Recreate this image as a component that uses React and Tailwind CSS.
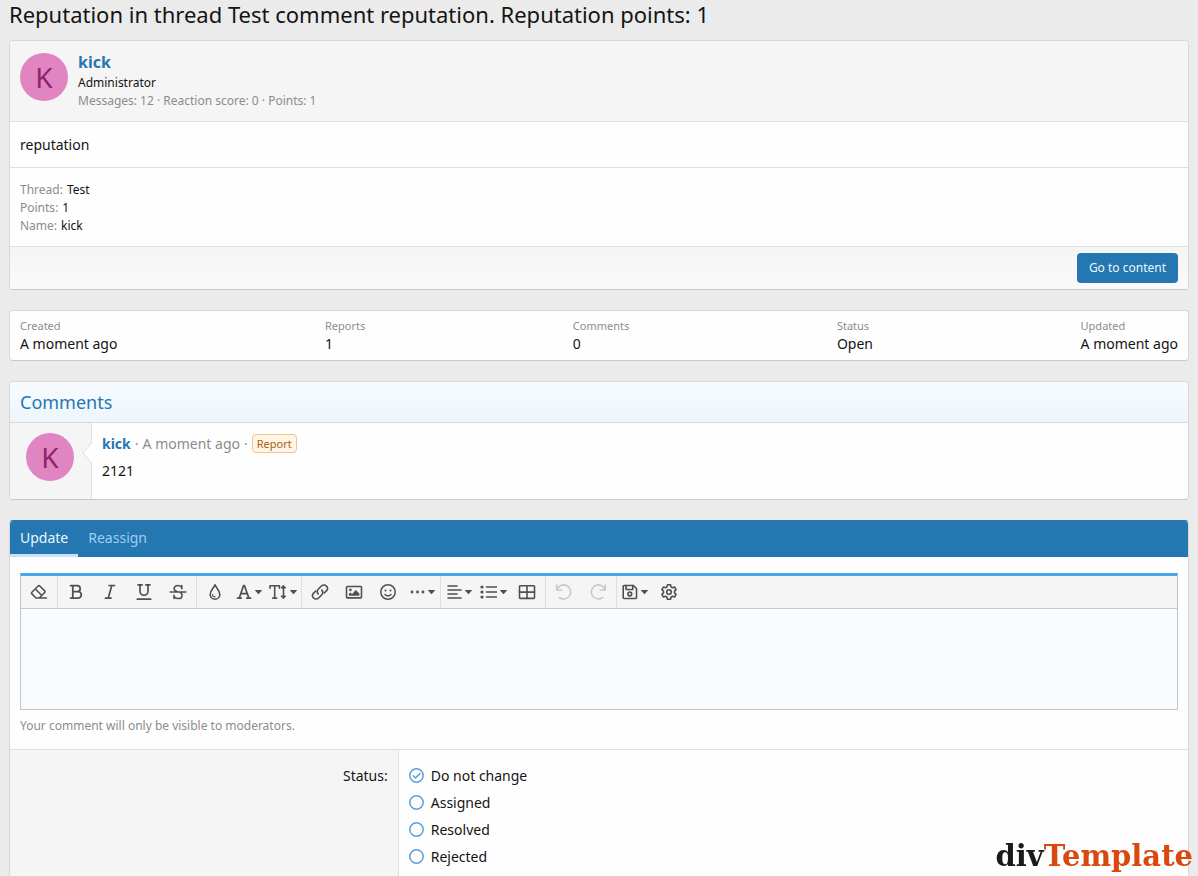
import { useState } from "react"
import { FaRegFaceSmile } from "react-icons/fa6"

const card =
  "rounded-[4px] border border-[#d8d8d8] border-b-[#c8c8c8] bg-[#fefefe] overflow-hidden"

const stats = [
  { label: "Created", value: "A moment ago" },
  { label: "Reports", value: "1" },
  { label: "Comments", value: "0" },
  { label: "Status", value: "Open" },
  { label: "Updated", value: "A moment ago" },
]

const details = [
  { label: "Thread", value: "Test" },
  { label: "Points", value: "1" },
  { label: "Name", value: "kick" },
]

const statuses = ["Do not change", "Assigned", "Resolved", "Rejected"]

function Icon({ children, width = 18 }) {
  return (
    <svg
      width={width}
      height="18"
      viewBox={`0 0 ${width} 18`}
      fill="none"
      stroke="currentColor"
      strokeWidth="1.6"
      strokeLinecap="round"
      strokeLinejoin="round"
      aria-hidden="true"
    >
      {children}
    </svg>
  )
}

function Caret() {
  return (
    <svg width="7" height="4" viewBox="0 0 7 4" fill="currentColor" aria-hidden="true">
      <path d="M.3 0h6.400c.3 0 .4.400.2.600L4 3.700a.7.7 0 0 1-1 0L.1.600C-.1.400 0 0 .3 0z" />
    </svg>
  )
}

const toolbar = [
  [
    {
      name: "Remove formatting",
      icon: (
        <Icon>
          <path d="M16.500 15H6L1.900 10.900a1.100 1.100 0 0 1 0-1.600l6.300-6.300a1.100 1.100 0 0 1 1.600 0l4.900 4.900a1.100 1.100 0 0 1 0 1.600L9.200 15M5.400 6l6.200 6.300" />
        </Icon>
      ),
    },
  ],
  [
    {
      name: "Bold",
      icon: (
        <Icon>
          <path
            d="M3.600 2.700h6.600a2.900 2.900 0 0 1 0 5.900H6M5.800 2.700v12.400M3.600 15.100h7.500a3.200 3.200 0 0 0 0-6.500H9"
            strokeWidth="1.800"
          />
        </Icon>
      ),
    },
    {
      name: "Italic",
      icon: (
        <Icon>
          <path d="M8 2.500h5.500M4.500 15.200H10M10.800 2.500L7.200 15.200" strokeWidth="1.700" />
        </Icon>
      ),
    },
    {
      name: "Underline",
      icon: (
        <Icon>
          <path
            d="M3 1.800h4.200M10.800 1.800H15M5 1.800v6.400a4 4 0 0 0 8 0V1.800M2.300 16.200h13.400"
            strokeWidth="1.700"
          />
        </Icon>
      ),
    },
    {
      name: "Strike through",
      icon: (
        <Icon>
          <path d="M1.200 9h15.600M12.800 5.800V2.600M12.800 4.600C12.200 3.300 10.800 2.500 9 2.500c-2.200 0-3.900 1.200-3.900 3 0 1.700 1.400 2.600 3.300 3.200M5 15.400v-3.200M5 13.300c.7 1.400 2.200 2.200 4 2.200 2.300 0 4.100-1.200 4.100-3.100 0-1.500-.8-2.500-2-3.100" />
        </Icon>
      ),
    },
  ],
  [
    {
      name: "Text color",
      icon: (
        <Icon>
          <path d="M9 1.800c.9 3 4.800 5.600 4.800 9.600a4.800 4.800 0 0 1-9.600 0C4.200 7.400 8.100 4.800 9 1.800z" />
          <path d="M6.500 11.500A2.500 2.500 0 0 0 9 13.900" strokeWidth="1.100" />
        </Icon>
      ),
    },
    {
      name: "Font family",
      caret: true,
      icon: (
        <Icon width={16}>
          <path
            d="M1.500 15.100h3.800M10.700 15.100h3.800M3.300 15.100L7.500 2.700h1l4.400 12.400M5 10.700h6"
            strokeWidth="1.700"
          />
        </Icon>
      ),
    },
    {
      name: "Font size",
      caret: true,
      icon: (
        <Icon width={18}>
          <path d="M1 5.300V2.700h9.400v2.600M5.700 2.700v12.400M3.700 15.100h4" />
          <path d="M14.500 4v10" />
          <path
            d="M14.500 2.500l2.200 2.500h-4.400zM14.500 15.500l2.200-2.500h-4.400z"
            fill="currentColor"
            strokeWidth="1"
          />
        </Icon>
      ),
    },
  ],
  [
    {
      name: "Insert link",
      icon: (
        <Icon>
          <path d="M7.200 10.900a3.500 3.500 0 0 1 .2-4.900l3-3a3.500 3.500 0 0 1 5 0 3.500 3.500 0 0 1 0 4.900l-1.900 1.900" />
          <path d="M10.800 7.100a3.500 3.500 0 0 1-.2 4.900l-3 3a3.500 3.500 0 0 1-5 0 3.500 3.500 0 0 1 0-4.900l1.900-1.900" />
        </Icon>
      ),
    },
    {
      name: "Insert image",
      icon: (
        <Icon>
          <rect x="1.500" y="3.500" width="15" height="11.400" rx=".8" />
          <circle cx="5.400" cy="6.900" r="1.300" fill="currentColor" stroke="none" />
          <path
            d="M3.800 12.800v-1.900l1.500-1.500 1.800 1.500 3.700-4 3.500 3.500v2.400z"
            fill="currentColor"
            stroke="none"
          />
        </Icon>
      ),
    },
    { name: "Smilies", icon: <FaRegFaceSmile size={16} aria-hidden="true" /> },
    {
      name: "Insert",
      caret: true,
      icon: (
        <Icon width={15}>
          <g fill="currentColor" stroke="none">
            <circle cx="2" cy="9" r="1.400" />
            <circle cx="7.500" cy="9" r="1.400" />
            <circle cx="13" cy="9" r="1.400" />
          </g>
        </Icon>
      ),
    },
  ],
  [
    {
      name: "Alignment",
      caret: true,
      icon: (
        <Icon width={15}>
          <path d="M1 3h9M1 7h13M1 11h9M1 15h13" />
        </Icon>
      ),
    },
    {
      name: "List",
      caret: true,
      icon: (
        <Icon width={17}>
          <path d="M6.500 4h10M6.500 9h10M6.500 14h10" />
          <g fill="currentColor" stroke="none">
            <circle cx="2" cy="4" r="1.600" />
            <circle cx="2" cy="9" r="1.600" />
            <circle cx="2" cy="14" r="1.600" />
          </g>
        </Icon>
      ),
    },
    {
      name: "Insert table",
      icon: (
        <Icon>
          <rect x="1.500" y="2.800" width="15" height="12.600" rx=".8" />
          <path d="M1.500 9.100h15M9 2.800v12.600" />
        </Icon>
      ),
    },
  ],
  [
    {
      name: "Undo",
      disabled: true,
      icon: (
        <Icon>
          <path d="M1.700 2v5h5M2 6.800a7 7 0 1 1 2.400 7.700" />
        </Icon>
      ),
    },
    {
      name: "Redo",
      disabled: true,
      icon: (
        <Icon>
          <path d="M16.300 2v5h-5M16 6.800a7 7 0 1 0-2.400 7.700" />
        </Icon>
      ),
    },
  ],
  [
    {
      name: "Drafts",
      caret: true,
      icon: (
        <Icon width={16}>
          <path d="M2.200 2.500h9.300l3 3v9a1 1 0 0 1-1 1H2.200a1 1 0 0 1-1-1v-11a1 1 0 0 1 1-1z" />
          <path d="M4 2.500v4h6.800v-4" />
          <circle cx="7.800" cy="11" r="1.900" />
        </Icon>
      ),
    },
    {
      name: "Toggle BB code",
      icon: (
        <Icon>
          <path d="M7.500 1.800h3l.5 2.100 1.500.9 2.100-.7 1.500 2.600-1.600 1.500v1.700l1.600 1.500-1.500 2.600-2.100-.7-1.500.9-.5 2.100h-3L7 14.200l-1.500-.9-2.100.7-1.500-2.600 1.600-1.500V8.200L1.900 6.700l1.500-2.600 2.100.7L7 3.900z" />
          <circle cx="9" cy="9" r="2.300" />
        </Icon>
      ),
    },
  ],
]

function Avatar() {
  return (
    <a
      href="#kick"
      className="flex h-12 w-12 shrink-0 items-center justify-center rounded-full bg-[#e085c2] text-[28px] leading-none text-[#8f246b]"
    >
      K
    </a>
  )
}

export default function App() {
  const [status, setStatus] = useState(statuses[0])
  const [tab, setTab] = useState("Update")

  return (
    <div className="flex min-h-screen flex-col bg-[#ebebeb] px-[9px] font-['Noto_Sans','Open_Sans',sans-serif] text-[14px] leading-[21px] text-[#141414]">
      <h1 className="pb-3 text-[22px] leading-7">
        Reputation in thread Test comment reputation. Reputation points: 1
      </h1>

      {/* Reported content */}
      <section className={card}>
        <div className="flex gap-[10px] border-b border-[#dfdfdf] bg-[#f5f5f5] px-[10px] pt-3 pb-[11px]">
          <Avatar />
          <div className="text-[12px] leading-[18px]">
            <a
              href="#kick"
              className="mb-[3px] block text-[16px] leading-[18px] font-bold text-[#2577b1]"
            >
              kick
            </a>
            <p>Administrator</p>
            <p className="text-[#8c8c8c]">Messages: 12 · Reaction score: 0 · Points: 1</p>
          </div>
        </div>
        <p className="border-b border-[#dfdfdf] px-[10px] py-3">reputation</p>
        <dl className="border-b border-[#dfdfdf] px-[10px] pt-[13px] pb-[11px] text-[12px] leading-[18px]">
          {details.map((d) => (
            <div key={d.label} className="flex gap-1">
              <dt className="text-[#8c8c8c]">{d.label}:</dt>
              <dd>{d.value}</dd>
            </div>
          ))}
        </dl>
        <div className="flex justify-end bg-linear-to-b from-[#f5f5f5] to-[#fafafa] px-[10px] py-[6px]">
          <a
            href="#content"
            className="rounded-[4px] bg-[#2577b1] px-3 py-[6px] text-[12px] leading-[18px] text-[#edf6fd]"
          >
            Go to content
          </a>
        </div>
      </section>

      {/* Summary */}
      <dl className={`${card} mt-5 flex justify-between px-[10px] py-[6px]`}>
        {stats.map((s) => (
          <div key={s.label}>
            <dt className="text-[11px] leading-[17px] text-[#8c8c8c]">{s.label}</dt>
            <dd className="leading-5">{s.value}</dd>
          </div>
        ))}
      </dl>

      {/* Comments */}
      <section className={`${card} mt-5`}>
        <h2 className="border-b border-[#d2dbe3] bg-linear-to-b from-[#f7fbff] to-[#edf6fd] px-[10px] py-[6px] text-[18px] leading-7 text-[#2577b1]">
          Comments
        </h2>
        <article className="flex">
          <div className="relative w-[82px] shrink-0 border-r border-[#dfdfdf] bg-[#f5f5f5] px-4 pt-[10px] pb-[18px]">
            <Avatar />
            <svg
              className="absolute top-5 -right-px"
              width="10"
              height="20"
              viewBox="0 0 10 20"
              aria-hidden="true"
            >
              <path d="M10 0v20L1 10z" fill="#fefefe" />
              <path d="M9.500 0L1 10l8.500 10" fill="none" stroke="#dfdfdf" />
            </svg>
          </div>
          <div className="px-[10px] pt-[10px]">
            <p className="flex items-center gap-1 text-[#8c8c8c]">
              <a href="#kick" className="font-bold text-[#2577b1]">
                kick
              </a>
              <span>·</span>
              <time>A moment ago</time>
              <span>·</span>
              <span className="rounded-[4px] border border-[#f1c38b] bg-[#fff4e5] px-1 text-[11px] leading-[17px] text-[#a66212]">
                Report
              </span>
            </p>
            <p className="pt-[6px]">2121</p>
          </div>
        </article>
      </section>

      {/* Update form */}
      <form className="mt-5 flex flex-1 flex-col overflow-hidden rounded-t-[4px] border border-b-0 border-[#d8d8d8] border-t-[#2577b1] bg-[#fefefe]">
        <div className="flex bg-[#2577b1]">
          {["Update", "Reassign"].map((t) => (
            <button
              key={t}
              type="button"
              onClick={() => setTab(t)}
              className={`border-b-3 px-[10px] py-[6px] leading-[21px] ${
                tab === t
                  ? "border-[#c7e2f6] text-[#edf6fd]"
                  : "border-transparent text-[#9ecfee]"
              }`}
            >
              {t}
            </button>
          ))}
        </div>

        <div className="border-b border-[#dfdfdf] px-[10px] pt-4 pb-[13px]">
          <div className="border border-t-3 border-[#c0c6ca] border-t-[#47a7eb]">
            <div className="flex border-b border-[#c8c8c8] bg-[#f5f5f5] text-[#505050]">
              {toolbar.map((group, i) => (
                <div
                  key={i}
                  className="flex border-r border-[#dfdfdf] px-px last:border-r-0"
                >
                  {group.map((b) => (
                    <button
                      key={b.name}
                      type="button"
                      title={b.name}
                      aria-label={b.name}
                      disabled={b.disabled}
                      className="flex h-8 w-[34px] items-center justify-center gap-[3px] disabled:text-[#c8c8c8]"
                    >
                      {b.icon}
                      {b.caret && <Caret />}
                    </button>
                  ))}
                </div>
              ))}
            </div>
            <textarea
              aria-label="Comment"
              className="block h-[100px] w-full resize-none bg-[#f8fcff] px-[10px] py-2 outline-none"
            />
          </div>
          <p className="pt-[6px] text-[12px] leading-5 text-[#8c8c8c]">
            Your comment will only be visible to moderators.
          </p>
        </div>

        <div role="radiogroup" aria-labelledby="status-label" className="flex flex-1">
          <div
            id="status-label"
            className="w-[33%] border-r border-[#dfdfdf] bg-[#f5f5f5] px-[10px] pt-[15px] text-right"
          >
            Status:
          </div>
          <div className="flex flex-col gap-[6px] px-[10px] pt-[15px]">
            {statuses.map((s) => (
              <label key={s} className="flex items-center gap-[7px]">
                <span className="relative flex text-[#5a9fdb]">
                  <input
                    type="radio"
                    name="status"
                    value={s}
                    checked={status === s}
                    onChange={() => setStatus(s)}
                    className="h-[15px] w-[15px] appearance-none rounded-full"
                  />
                  <svg
                    className="pointer-events-none absolute inset-0"
                    width="15"
                    height="15"
                    viewBox="0 0 15 15"
                    fill="none"
                    stroke="currentColor"
                    strokeWidth="1.500"
                    strokeLinecap="round"
                    strokeLinejoin="round"
                    aria-hidden="true"
                  >
                    <circle cx="7.500" cy="7.500" r="6.700" />
                    {status === s && <path d="M4.300 7.800l2.200 2.200 4.400-4.400" />}
                  </svg>
                </span>
                {s}
              </label>
            ))}
          </div>
        </div>
      </form>

      <div className="fixed right-[5px] bottom-1 font-['DejaVu_Serif',serif] text-[29px] leading-8 font-bold text-[#1a1a1a]">
        div<span className="text-[#d9480f]">Template</span>
      </div>
    </div>
  )
}
